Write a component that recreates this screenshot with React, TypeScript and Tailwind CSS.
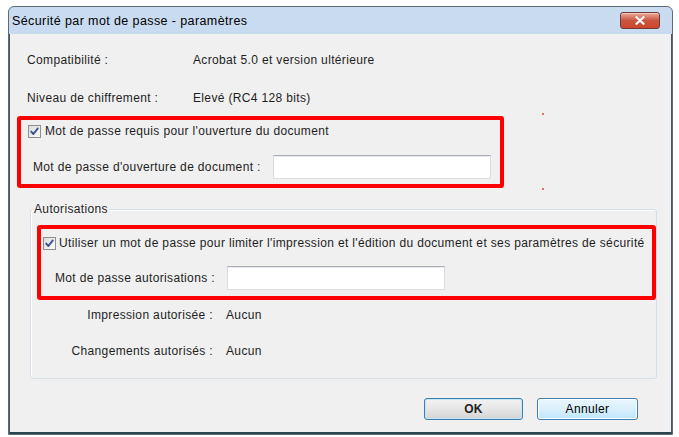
import React from 'react';

function CheckBox() {
  return (
    <span className="inline-flex h-[13px] w-[13px] shrink-0 items-center justify-center border border-[#8e8f8f] bg-gradient-to-br from-[#dcdcdc] to-[#fbfbfb]">
      <svg width="11" height="11" viewBox="0 0 11 11">
        <path d="M2.2 5.6 L4.4 8 L8.8 2.4" fill="none" stroke="#3c5591" strokeWidth="1.9" strokeLinecap="round" strokeLinejoin="round" />
      </svg>
    </span>
  );
}

function TextInput({ width }: { width: string }) {
  return (
    <div
      className={`${width} h-[24px] border border-[#dadee3] border-t-[#abadb3] bg-white shadow-[inset_0_1px_0_#e3e9ef]`}
    />
  );
}

export default function App() {
  return (
    <div className="relative h-[437px] w-[679px] overflow-hidden bg-white font-['Liberation_Sans',Arial,sans-serif] text-[12px] leading-[14px] tracking-[0.35px] text-[#1e1e1e]">
      {/* Window */}
      <div className="ml-[8px] mt-[6px] flex h-[429px] w-[665px] flex-col rounded-t-[6px] border border-[#5d6a78] bg-gradient-to-b from-[#cadcf0] via-[#b8cfe8] to-[#b0c8e4]">
        {/* Title bar */}
        <div className="flex h-[27px] shrink-0 items-center pl-[3px] pr-[12px]">
          <span className="text-[12.5px] tracking-[0.4px] text-black">Sécurité par mot de passe - paramètres</span>
          <div className="ml-auto flex h-[17px] w-[40px] items-center justify-center rounded-[3px] border border-[#6d3a36] bg-gradient-to-b from-[#e9a99b] via-[#c9553f] to-[#d0442c] shadow-[inset_0_1px_0_#f4c8bd]">
            <svg width="10" height="9" viewBox="0 0 10 9">
              <path d="M1.5 1.2 L8.5 7.8 M8.5 1.2 L1.5 7.8" stroke="#ffffff" strokeWidth="2.2" strokeLinecap="round" />
            </svg>
          </div>
        </div>

        {/* Client area */}
        <div className="flex flex-1 flex-col border-l border-r border-b-[2px] border-[#4a5560] border-b-[#2a4450] bg-[#f0f0f0]">
          <div className="ml-[17px] mt-[19px] flex">
            <span className="w-[166px]">Compatibilité :</span>
            <span>Acrobat 5.0 et version ultérieure</span>
          </div>
          <div className="ml-[17px] mt-[24px] flex">
            <span className="w-[166px]">Niveau de chiffrement :</span>
            <span>Elevé (RC4 128 bits)</span>
          </div>

          {/* Open password */}
          <div className="ml-[7px] mt-[11px] h-[72px] w-[487px] rounded-[3px] border-[4px] border-[#ff0000]">
            <div className="ml-[7px] mt-[4px] flex items-center gap-[4px]">
              <CheckBox />
              <span>Mot de passe requis pour l&apos;ouverture du document</span>
            </div>
            <div className="ml-[12px] mt-[17px] flex items-center">
              <span className="w-[240px]">Mot de passe d&apos;ouverture de document :</span>
              <TextInput width="w-[218px]" />
            </div>
          </div>

          {/* Permissions group */}
          <fieldset className="ml-[20px] mt-[14px] h-[177px] w-[620px] rounded-[3px] border border-[#d5dfe5] px-0 pb-0 shadow-[inset_1px_1px_0_#ffffff]">
            <legend className="ml-[2px] px-[1px]">Autorisations</legend>
            <div className="ml-[6px] mt-[9px] h-[75px] w-[619px] rounded-[3px] border-[4px] border-[#ff0000]">
              <div className="ml-[2px] mt-[7px] flex items-center gap-[3px]">
                <CheckBox />
                <span className="whitespace-nowrap">
                  Utiliser un mot de passe pour limiter l&apos;impression et l&apos;édition du document et ses paramètres de sécurité
                </span>
              </div>
              <div className="ml-[14px] mt-[16px] flex items-center">
                <span className="w-[172px]">Mot de passe autorisations :</span>
                <TextInput width="w-[218px]" />
              </div>
            </div>
            <div className="mt-[8px] flex">
              <span className="w-[182px] text-right">Impression autorisée :</span>
              <span className="ml-[13px]">Aucun</span>
            </div>
            <div className="mt-[22px] flex">
              <span className="w-[182px] text-right">Changements autorisés :</span>
              <span className="ml-[13px]">Aucun</span>
            </div>
          </fieldset>

          {/* Buttons */}
          <div className="mr-[33px] mt-[19px] flex justify-end gap-[14px]">
            <button className="h-[22px] w-[99px] rounded-[3px] border border-[#3c7fb1] bg-gradient-to-b from-[#f2f2f2] via-[#e6e6e6] to-[#d4d4d4] text-[12px] font-bold text-[#222] shadow-[inset_0_0_0_1px_#c5e5f7]">
              OK
            </button>
            <button className="h-[22px] w-[101px] rounded-[3px] border border-[#3c7fb1] bg-gradient-to-b from-[#eaf6fd] via-[#d9f0fc] to-[#bee6fd] text-[12px] text-black shadow-[inset_0_0_0_1px_#ffffff]">
              Annuler
            </button>
          </div>
        </div>
      </div>

      {/* Annotation dots */}
      <span className="absolute left-[542px] top-[113px] h-[2px] w-[2px] rounded-full bg-[#e04040]" />
      <span className="absolute left-[542px] top-[188px] h-[2px] w-[2px] rounded-full bg-[#e04040]" />
    </div>
  );
}
